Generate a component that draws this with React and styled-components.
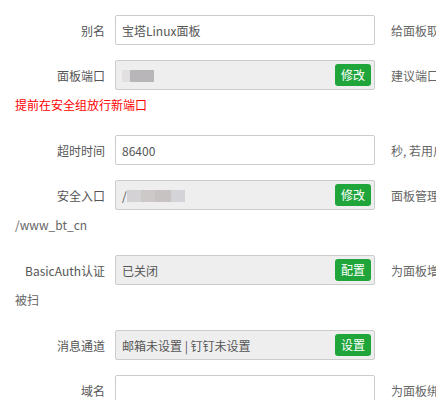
import React from 'react';
import styled, {createGlobalStyle} from 'styled-components';

const GlobalStyle = createGlobalStyle`
  html, body {
    margin: 0;
    padding: 0;
    background: #fff;
    overflow: hidden;
  }
  body {
    font-family: "Noto Sans CJK SC", "Noto Sans", sans-serif;
    font-size: 12px;
    color: #555;
  }
`;

const Form = styled.div`
  width: 436px;
  padding: 15px 0 0 15px;
  box-sizing: border-box;
  overflow: hidden;
`;

const Line = styled.div`
  margin-bottom: 15px;
`;

const Row = styled.div`
  display: flex;
  align-items: center;
  height: 30px;
  white-space: nowrap;
`;

const Label = styled.span`
  flex: none;
  width: 90px;
  margin-right: 10px;
  text-align: right;
  color: #555;
`;

const Field = styled.div`
  position: relative;
  flex: none;
  display: flex;
  align-items: center;
  width: 260px;
  height: 30px;
  box-sizing: border-box;
  padding: 0 6px;
  border: 1px solid #ccc;
  border-radius: 2px;
  background: ${p => (p.disabled ? '#eee' : '#fff')};
  color: #555;
`;

const Btn = styled.span`
  position: absolute;
  right: 3px;
  top: 3px;
  width: 36px;
  height: 22px;
  line-height: 22px;
  text-align: center;
  background: #20a53a;
  color: #fff;
  border-radius: 3px;
  font-size: 12px;
`;

const Help = styled.span`
  flex: none;
  margin-left: 16px;
  color: #666;
`;

const More = styled.div`
  height: 30px;
  line-height: 30px;
  color: ${p => (p.red ? '#f00' : '#666')};
`;

const Blur = styled.span`
  display: inline-block;
  height: 12px;
  width: ${p => p.w}px;
  background: ${p => p.c};
  filter: blur(0.6px);
`;

const Masked = styled.span`
  display: flex;
  align-items: center;
  margin-top: 1px;
`;

const App = () => (
  <Form>
    <GlobalStyle />
    <Line>
      <Row>
        <Label>别名</Label>
        <Field>宝塔Linux面板</Field>
        <Help>给面板取个别名</Help>
      </Row>
    </Line>
    <Line>
      <Row>
        <Label>面板端口</Label>
        <Field disabled>
          <Masked>
            <Blur w={8} c="#e2dfe0" />
            <Blur w={24} c="#b8b6b8" />
          </Masked>
          <Btn>修改</Btn>
        </Field>
        <Help>建议端口范围8888 - 65535</Help>
      </Row>
      <More red>提前在安全组放行新端口</More>
    </Line>
    <Line>
      <Row>
        <Label>超时时间</Label>
        <Field>86400</Field>
        <Help>秒, 若用户超过此时间未操作</Help>
      </Row>
    </Line>
    <Line>
      <Row>
        <Label>安全入口</Label>
        <Field disabled>
          <Masked>
            <span>/</span>
            <Blur w={14} c="#d4d2d4" />
            <Blur w={14} c="#cdc9c9" />
            <Blur w={16} c="#c8c3c3" />
            <Blur w={14} c="#d3d3d8" />
          </Masked>
          <Btn>修改</Btn>
        </Field>
        <Help>面板管理入口，设置后只能通过指定安全入口</Help>
      </Row>
      <More>/www_bt_cn</More>
    </Line>
    <Line>
      <Row>
        <Label>BasicAuth认证</Label>
        <Field disabled>
          已关闭
          <Btn>配置</Btn>
        </Field>
        <Help>为面板增加一道基于BasicAuth的认证服务，防止</Help>
      </Row>
      <More>被扫</More>
    </Line>
    <Line>
      <Row>
        <Label>消息通道</Label>
        <Field disabled>
          邮箱未设置 | 钉钉未设置
          <Btn>设置</Btn>
        </Field>
      </Row>
    </Line>
    <Line>
      <Row>
        <Label>域名</Label>
        <Field />
        <Help>为面板绑定一个访问域名</Help>
      </Row>
    </Line>
  </Form>
);

export default App;
